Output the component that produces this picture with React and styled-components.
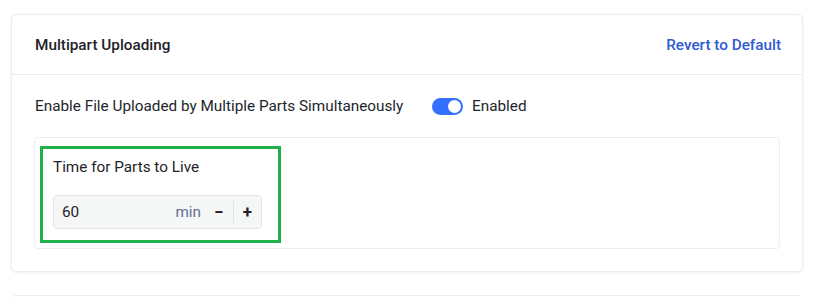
import React from "react";
import styled, { createGlobalStyle } from "styled-components";

const Global = createGlobalStyle`
  html, body { margin: 0; padding: 0; background: #fff; }
  body { font-family: Roboto, "Noto Sans", sans-serif; color: #1f2329; }
  * { box-sizing: border-box; }
`;

const Page = styled.div`
  padding: 14px 13px 0 11px;
  display: flex;
  flex-direction: column;
  gap: 23px;
`;

const Card = styled.section`
  background: #fff;
  border: 1px solid #ebedef;
  border-radius: 5px;
  box-shadow: 0 1px 3px rgba(0, 0, 0, 0.06);
`;

const Header = styled.div`
  height: 60px;
  display: flex;
  align-items: center;
  justify-content: space-between;
  padding: 0 21px 0 23px;
  border-bottom: 1px solid #ebedef;
`;

const Title = styled.h2`
  margin: 0;
  font-size: 15.3px;
  font-weight: 500;
  color: #1f2329;
`;

const LinkButton = styled.button`
  border: 0;
  background: none;
  padding: 0;
  font: inherit;
  font-size: 15.3px;
  font-weight: 500;
  color: #2f5bd0;
  cursor: pointer;
`;

const Body = styled.div`
  padding: 0 22px 22px 22px;
`;

const Row = styled.div`
  height: 62px;
  display: flex;
  align-items: center;
  font-size: 15.3px;
  color: #22262c;
`;

const RowLabel = styled.span`
  width: 398px;
  padding-left: 1px;
`;

const Toggle = styled.span`
  width: 31px;
  height: 17px;
  border-radius: 9px;
  background: ${(p) => (p.$on ? "#3370ff" : "#c9cdd4")};
  display: inline-flex;
  align-items: center;
  justify-content: ${(p) => (p.$on ? "flex-end" : "flex-start")};
  padding: 0 2px;
  margin-right: 9px;
  &::after {
    content: "";
    width: 13px;
    height: 13px;
    border-radius: 50%;
    background: #fff;
  }
`;

const SubBox = styled.div`
  border: 1px solid #ebedef;
  border-radius: 4px;
  padding: 8px 6px 5px 5px;
`;

const FormItem = styled.div`
  width: 241px;
  border: 3px solid #20b049;
  padding: 8px 16px 11px 10px;
  display: flex;
  flex-direction: column;
  gap: 18px;
`;

const FieldLabel = styled.label`
  font-size: 15.3px;
  color: #1f2329;
  line-height: 20px;
  height: 20px;
`;

const NumberInput = styled.div`
  height: 34px;
  border: 1px solid #e2e5e8;
  border-radius: 4px;
  background: #f5f7f7;
  display: flex;
  align-items: center;
  padding-left: 8px;
  font-size: 15.3px;
`;

const Value = styled.span`
  flex: 1;
  color: #1f2329;
`;

const Unit = styled.span`
  color: #5f7196;
  margin-right: 4px;
`;

const Step = styled.button`
  border: 0;
  background: none;
  width: 28px;
  height: 22px;
  padding: 0;
  display: flex;
  align-items: center;
  justify-content: center;
  color: #1f2329;
  font: inherit;
  font-size: 17px;
  font-weight: 700;
  border-left: ${(p) => (p.$sep ? "1px solid #dfe2e5" : "0")};
`;

const NextCard = styled.div`
  height: 20px;
  border: 1px solid #ebedef;
  border-bottom: 0;
  border-radius: 5px 5px 0 0;
`;

export default function App() {
  return (
    <>
      <Global />
      <Page>
        <Card>
          <Header>
            <Title>Multipart Uploading</Title>
            <LinkButton>Revert to Default</LinkButton>
          </Header>
          <Body>
            <Row>
              <RowLabel>Enable File Uploaded by Multiple Parts Simultaneously</RowLabel>
              <Toggle $on />
              <span>Enabled</span>
            </Row>
            <SubBox>
              <FormItem>
                <FieldLabel>Time for Parts to Live</FieldLabel>
                <NumberInput>
                  <Value>60</Value>
                  <Unit>min</Unit>
                  <Step>−</Step>
                  <Step $sep>+</Step>
                </NumberInput>
              </FormItem>
            </SubBox>
          </Body>
        </Card>
        <NextCard />
      </Page>
    </>
  );
}
